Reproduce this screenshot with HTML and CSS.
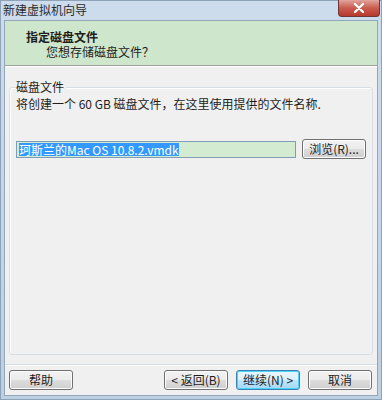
FILE: index.html
```html
<!DOCTYPE html>
<html lang="zh-CN">
<head>
    <meta charset="UTF-8">
    <title>新建虚拟机向导</title>
    <link rel="stylesheet" href="styles.css">
</head>
<body>
    <div class="window">
        <div class="titlebar">
            <span class="title">新建虚拟机向导</span>
            <span class="close">
                <svg width="12" height="10" viewBox="0 0 12 10">
                    <path d="M2 1 L10 9 M10 1 L2 9" stroke="#ffffff" stroke-width="2.2" stroke-linecap="round"/>
                </svg>
            </span>
        </div>

        <div class="client">
            <div class="header">
                <div class="header-title">指定磁盘文件</div>
                <div class="header-sub">您想存储磁盘文件？</div>
            </div>

            <div class="main">
                <div class="group">
                    <div class="group-label">磁盘文件</div>
                    <div class="desc">将创建一个 60 GB 磁盘文件，在这里使用提供的文件名称.</div>
                    <div class="file-row">
                        <div class="file-input"><span class="selected">珂斯兰的Mac OS 10.8.2.vmdk</span></div>
                        <button class="btn browse">浏览(R)...</button>
                    </div>
                </div>
            </div>

            <div class="footer">
                <button class="btn">帮助</button>
                <div class="spacer"></div>
                <button class="btn">&lt; 返回(B)</button>
                <button class="btn default">继续(N) &gt;</button>
                <button class="btn">取消</button>
            </div>
        </div>
    </div>
</body>
</html>
```

FILE: styles.css
```css
body {
    margin: 0;
    font-family: "Noto Sans CJK SC", "Liberation Sans", sans-serif;
    font-size: 12px;
    color: #1e1e1e;
}

.window {
    width: 382px;
    height: 400px;
    display: flex;
    flex-direction: column;
    background: linear-gradient(#cddcec, #c3d5e8 60%, #bccfe3);
    box-sizing: border-box;
    border: 1px solid #8ea3b8;
}

.titlebar {
    height: 19px;
    display: flex;
    align-items: flex-start;
    justify-content: space-between;
}

.title {
    padding: 1px 0 0 2px;
    font-size: 12px;
    line-height: 16px;
    color: #2b2b2b;
}

.close {
    width: 42px;
    height: 17px;
    margin-right: 1px;
    margin-top: -1px;
    border: 1px solid #6e3634;
    border-top: none;
    border-radius: 0 0 4px 4px;
    background: linear-gradient(#e3a59c, #c85b4f 50%, #b6392d);
    display: flex;
    align-items: center;
    justify-content: center;
    box-sizing: border-box;
}

.client {
    flex: 1;
    margin: 0 3px 3px 3px;
    border: 1px solid #93a6ba;
    background: #f0f0f0;
    display: flex;
    flex-direction: column;
}

.header {
    height: 45px;
    background: #cee7cc;
    border-bottom: 1px solid #a0a0a0;
    box-shadow: 0 1px 0 #ffffff;
    box-sizing: border-box;
    padding: 8px 0 0 21px;
}

.header-title {
    font-weight: bold;
    line-height: 15px;
}

.header-sub {
    padding-left: 20px;
    line-height: 15px;
}

.main {
    flex: 1;
    padding: 21px 7px 9px 4px;
    display: flex;
}

.group {
    flex: 1;
    border: 1px solid #d5dfe5;
    border-radius: 3px;
    box-shadow: inset 1px 1px 0 #ffffff;
    padding: 0 6px;
}

.group-label {
    background: #f0f0f0;
    width: fit-content;
    margin-top: -9px;
    padding: 0 2px 0 0;
    line-height: 16px;
}

.desc {
    line-height: 16px;
    margin-top: 1px;
}

.file-row {
    display: flex;
    align-items: center;
    margin-top: 27px;
}

.file-input {
    width: 280px;
    height: 17px;
    border: 1px solid #7f9db9;
    background: #d3ebd0;
    box-sizing: border-box;
    padding-left: 2px;
    display: flex;
    align-items: center;
    line-height: 13px;
}

.selected {
    background: #3399ff;
    color: #ffffff;
}

.btn {
    font-family: "Noto Sans CJK SC", "Liberation Sans", sans-serif;
    font-size: 12px;
    color: #1e1e1e;
    height: 20px;
    padding: 0;
    border: 1px solid #707070;
    border-radius: 3px;
    background: linear-gradient(#f2f2f2, #ebebeb 50%, #dddddd 51%, #cfcfcf);
    box-shadow: inset 0 0 0 1px #fcfcfc;
    line-height: 16px;
}

.browse {
    width: 64px;
    margin-left: 6px;
}

.footer {
    height: 30px;
    border-top: 1px solid #d5dfe5;
    box-shadow: inset 0 1px 0 #ffffff;
    display: flex;
    align-items: center;
    padding: 0 5px 0 4px;
}

.footer .btn {
    width: 64px;
    margin-left: 8px;
}

.footer .btn:first-child {
    margin-left: 0;
}

.spacer {
    flex: 1;
}

.btn.default {
    border-color: #3c7fb1;
    background: linear-gradient(#eaf6fd, #d9f0fc 50%, #bee6fd 51%, #a7d9f5);
    box-shadow: inset 0 0 0 1px #48d4fc;
}
```
